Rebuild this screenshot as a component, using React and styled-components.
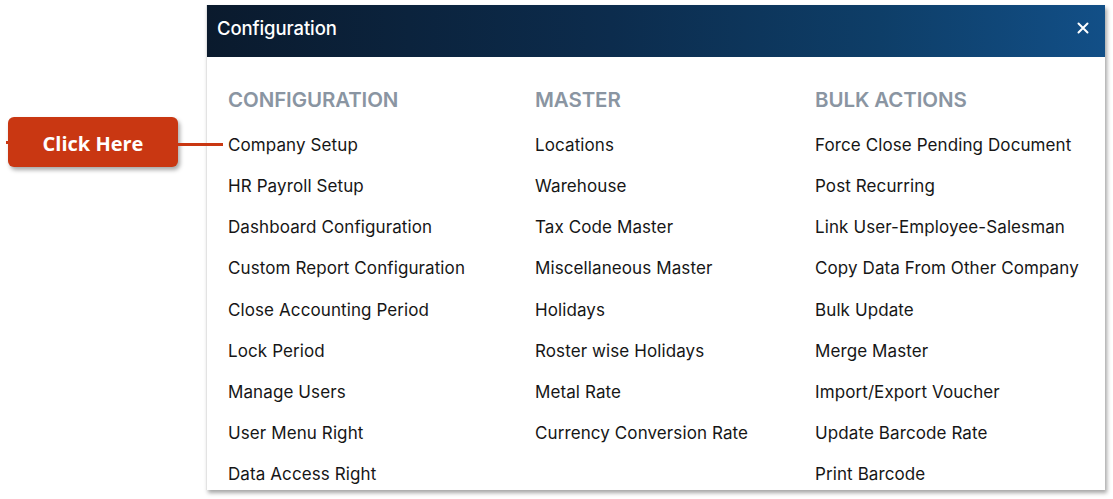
import React from 'react'
import styled, { createGlobalStyle } from 'styled-components'

const columns = [
  {
    title: 'CONFIGURATION',
    width: '307px',
    items: [
      'Company Setup',
      'HR Payroll Setup',
      'Dashboard Configuration',
      'Custom Report Configuration',
      'Close Accounting Period',
      'Lock Period',
      'Manage Users',
      'User Menu Right',
      'Data Access Right',
    ],
  },
  {
    title: 'MASTER',
    width: '280px',
    items: [
      'Locations',
      'Warehouse',
      'Tax Code Master',
      'Miscellaneous Master',
      'Holidays',
      'Roster wise Holidays',
      'Metal Rate',
      'Currency Conversion Rate',
    ],
  },
  {
    title: 'BULK ACTIONS',
    width: 'auto',
    items: [
      'Force Close Pending Document',
      'Post Recurring',
      'Link User-Employee-Salesman',
      'Copy Data From Other Company',
      'Bulk Update',
      'Merge Master',
      'Import/Export Voucher',
      'Update Barcode Rate',
      'Print Barcode',
    ],
  },
]

export default function App() {
  return (
    <>
      <GlobalStyle />
      <Page>
        <Panel>
          <Callout>
            <CalloutBox>Click Here</CalloutBox>
            <CalloutLine />
          </Callout>
          <Header>
            <Title>Configuration</Title>
            <Close aria-label="close">
              <svg width="12" height="12" viewBox="0 0 12 12">
                <path d="M1.5 1.5 L10.5 10.5 M10.5 1.5 L1.5 10.5" stroke="#fff" strokeWidth="2" strokeLinecap="round" />
              </svg>
            </Close>
          </Header>
          <Body>
            {columns.map((col) => (
              <Column key={col.title} $width={col.width}>
                <Heading>{col.title}</Heading>
                {col.items.map((item) => (
                  <Item key={item}>{item}</Item>
                ))}
              </Column>
            ))}
          </Body>
        </Panel>
      </Page>
    </>
  )
}

const GlobalStyle = createGlobalStyle`
  html, body {
    margin: 0;
    background: #ffffff;
  }
  body {
    font-family: Inter, "Noto Sans", sans-serif;
  }
`

const Page = styled.div`
  width: 1113px;
  height: 499px;
  padding: 5px 0 0 206px;
  box-sizing: border-box;
  overflow: hidden;
`

const Panel = styled.div`
  position: relative;
  width: 898px;
  height: 485px;
  background: #fff;
  border-left: 1px solid #e3e3e3;
  box-shadow: 2px 3px 4px rgba(0, 0, 0, 0.35);
  display: flex;
  flex-direction: column;
`

const Header = styled.div`
  height: 52px;
  flex-shrink: 0;
  display: flex;
  align-items: center;
  justify-content: space-between;
  padding: 0 16px 0 10px;
  background: linear-gradient(90deg, #0a1a2d 0%, #0c2c4d 45%, #0e3e68 75%, #124f87 100%);
`

const Title = styled.div`
  color: #fff;
  font-size: 18.5px;
  font-weight: 500;
  letter-spacing: -0.1px;
  margin-top: -6px;
`

const Close = styled.div`
  display: flex;
  align-items: center;
  margin-top: -6px;
`

const Body = styled.div`
  display: flex;
  padding: 28px 0 0 21px;
`

const Column = styled.div`
  width: ${(p) => p.$width};
  display: flex;
  flex-direction: column;
`

const Heading = styled.div`
  font-size: 20.5px;
  font-weight: 600;
  color: #8a95a2;
  line-height: 30px;
  letter-spacing: -0.1px;
  margin-bottom: 20px;
`

const Item = styled.div`
  font-size: 17px;
  color: #161616;
  line-height: 20px;
  height: 41.15px;
  letter-spacing: 0.1px;
`

const Callout = styled.div`
  position: absolute;
  left: -199px;
  top: 112px;
  display: flex;
  align-items: center;

  &::before {
    content: '';
    position: absolute;
    left: -2px;
    top: 24px;
    width: 4px;
    height: 3px;
    background: #c93712;
  }
`

const CalloutBox = styled.div`
  width: 170px;
  height: 50px;
  border-radius: 6px;
  background: #c93712;
  box-shadow: 2px 3px 4px rgba(0, 0, 0, 0.35);
  color: #fff;
  font-family: "Open Sans", "Liberation Sans", sans-serif;
  font-weight: 700;
  font-size: 20px;
  padding-top: 3px;
  box-sizing: border-box;
  display: flex;
  align-items: center;
  justify-content: center;
`

const CalloutLine = styled.div`
  width: 45px;
  height: 3px;
  margin-top: 4px;
  background: #c93712;
`
